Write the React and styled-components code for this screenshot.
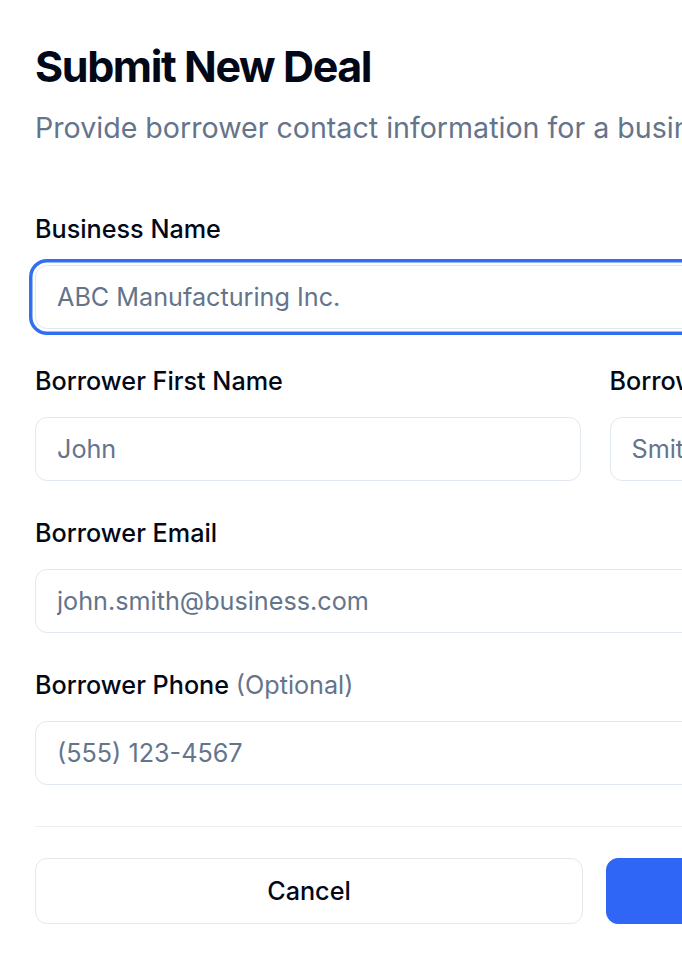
import React from 'react'
import styled, { createGlobalStyle } from 'styled-components'

const Global = createGlobalStyle`
  html, body { margin: 0; padding: 0; background: #fff; overflow: hidden; }
  body { font-family: Inter, "Noto Sans", sans-serif; color: #020817; }
  * { box-sizing: border-box; }
`

const Dialog = styled.div`
  width: 1190px;
  padding: 40px 35px;
`
const Title = styled.h2`
  margin: 0;
  font-size: 43px;
  line-height: 52px;
  font-weight: 700;
  letter-spacing: -1.4px;
  color: #020817;
`
const Subtitle = styled.p`
  margin: 15px 0 0 0;
  font-size: 28.6px;
  line-height: 42px;
  color: #64748b;
  white-space: nowrap;
`
const Form = styled.form`
  display: flex;
  flex-direction: column;
  gap: 34px;
  margin-top: 62px;
  width: 1120px;
`
const Row = styled.div`
  display: grid;
  grid-template-columns: 1fr 1fr;
  gap: 29px;
`
const Field = styled.div`
  display: flex;
  flex-direction: column;
  gap: 18px;
`
const Label = styled.label`
  font-size: 25.2px;
  line-height: 36px;
  font-weight: 500;
  color: #020817;
`
const Muted = styled.span`
  color: #64748b;
  font-weight: 400;
`
const Input = styled.input`
  height: 64px;
  width: 100%;
  padding: 0 21px;
  border: 1.5px solid #e2e8f0;
  border-radius: 12px;
  font-family: inherit;
  font-size: 25.2px;
  color: #020817;
  background: #fff;
  outline: none;
  box-shadow: ${p => p.$focused ? '0 0 0 2.5px #fff, 0 0 0 6px #3070f0' : 'none'};
  &::placeholder { color: #64748b; }
`
const Divider = styled.hr`
  margin: 7px 0 0 0;
  border: none;
  border-top: 1.5px solid #eef0f4;
`
const Actions = styled.div`
  display: grid;
  grid-template-columns: 548px 1fr;
  gap: 23px;
  margin-top: -3px;
`
const Button = styled.button`
  height: 66px;
  border-radius: 12px;
  font-family: inherit;
  font-size: 25.2px;
  font-weight: 500;
  border: 1.5px solid ${p => p.$primary ? '#2f66f5' : '#e5e7eb'};
  background: ${p => p.$primary ? '#2f66f5' : '#fff'};
  color: ${p => p.$primary ? '#fff' : '#020817'};
`

export default function App() {
  return (
    <>
      <Global />
      <Dialog>
        <Title>Submit New Deal</Title>
        <Subtitle>Provide borrower contact information for a business loan application.</Subtitle>
        <Form onSubmit={e => e.preventDefault()}>
          <Field>
            <Label>Business Name</Label>
            <Input $focused placeholder="ABC Manufacturing Inc." />
          </Field>
          <Row>
            <Field>
              <Label>Borrower First Name</Label>
              <Input placeholder="John" />
            </Field>
            <Field>
              <Label>Borrower Last Name</Label>
              <Input placeholder="Smith" />
            </Field>
          </Row>
          <Field>
            <Label>Borrower Email</Label>
            <Input placeholder="john.smith@business.com" />
          </Field>
          <Field>
            <Label>Borrower Phone <Muted>(Optional)</Muted></Label>
            <Input placeholder="(555) 123-4567" />
          </Field>
          <Divider />
          <Actions>
            <Button type="button">Cancel</Button>
            <Button type="submit" $primary>Submit Deal</Button>
          </Actions>
        </Form>
      </Dialog>
    </>
  )
}
